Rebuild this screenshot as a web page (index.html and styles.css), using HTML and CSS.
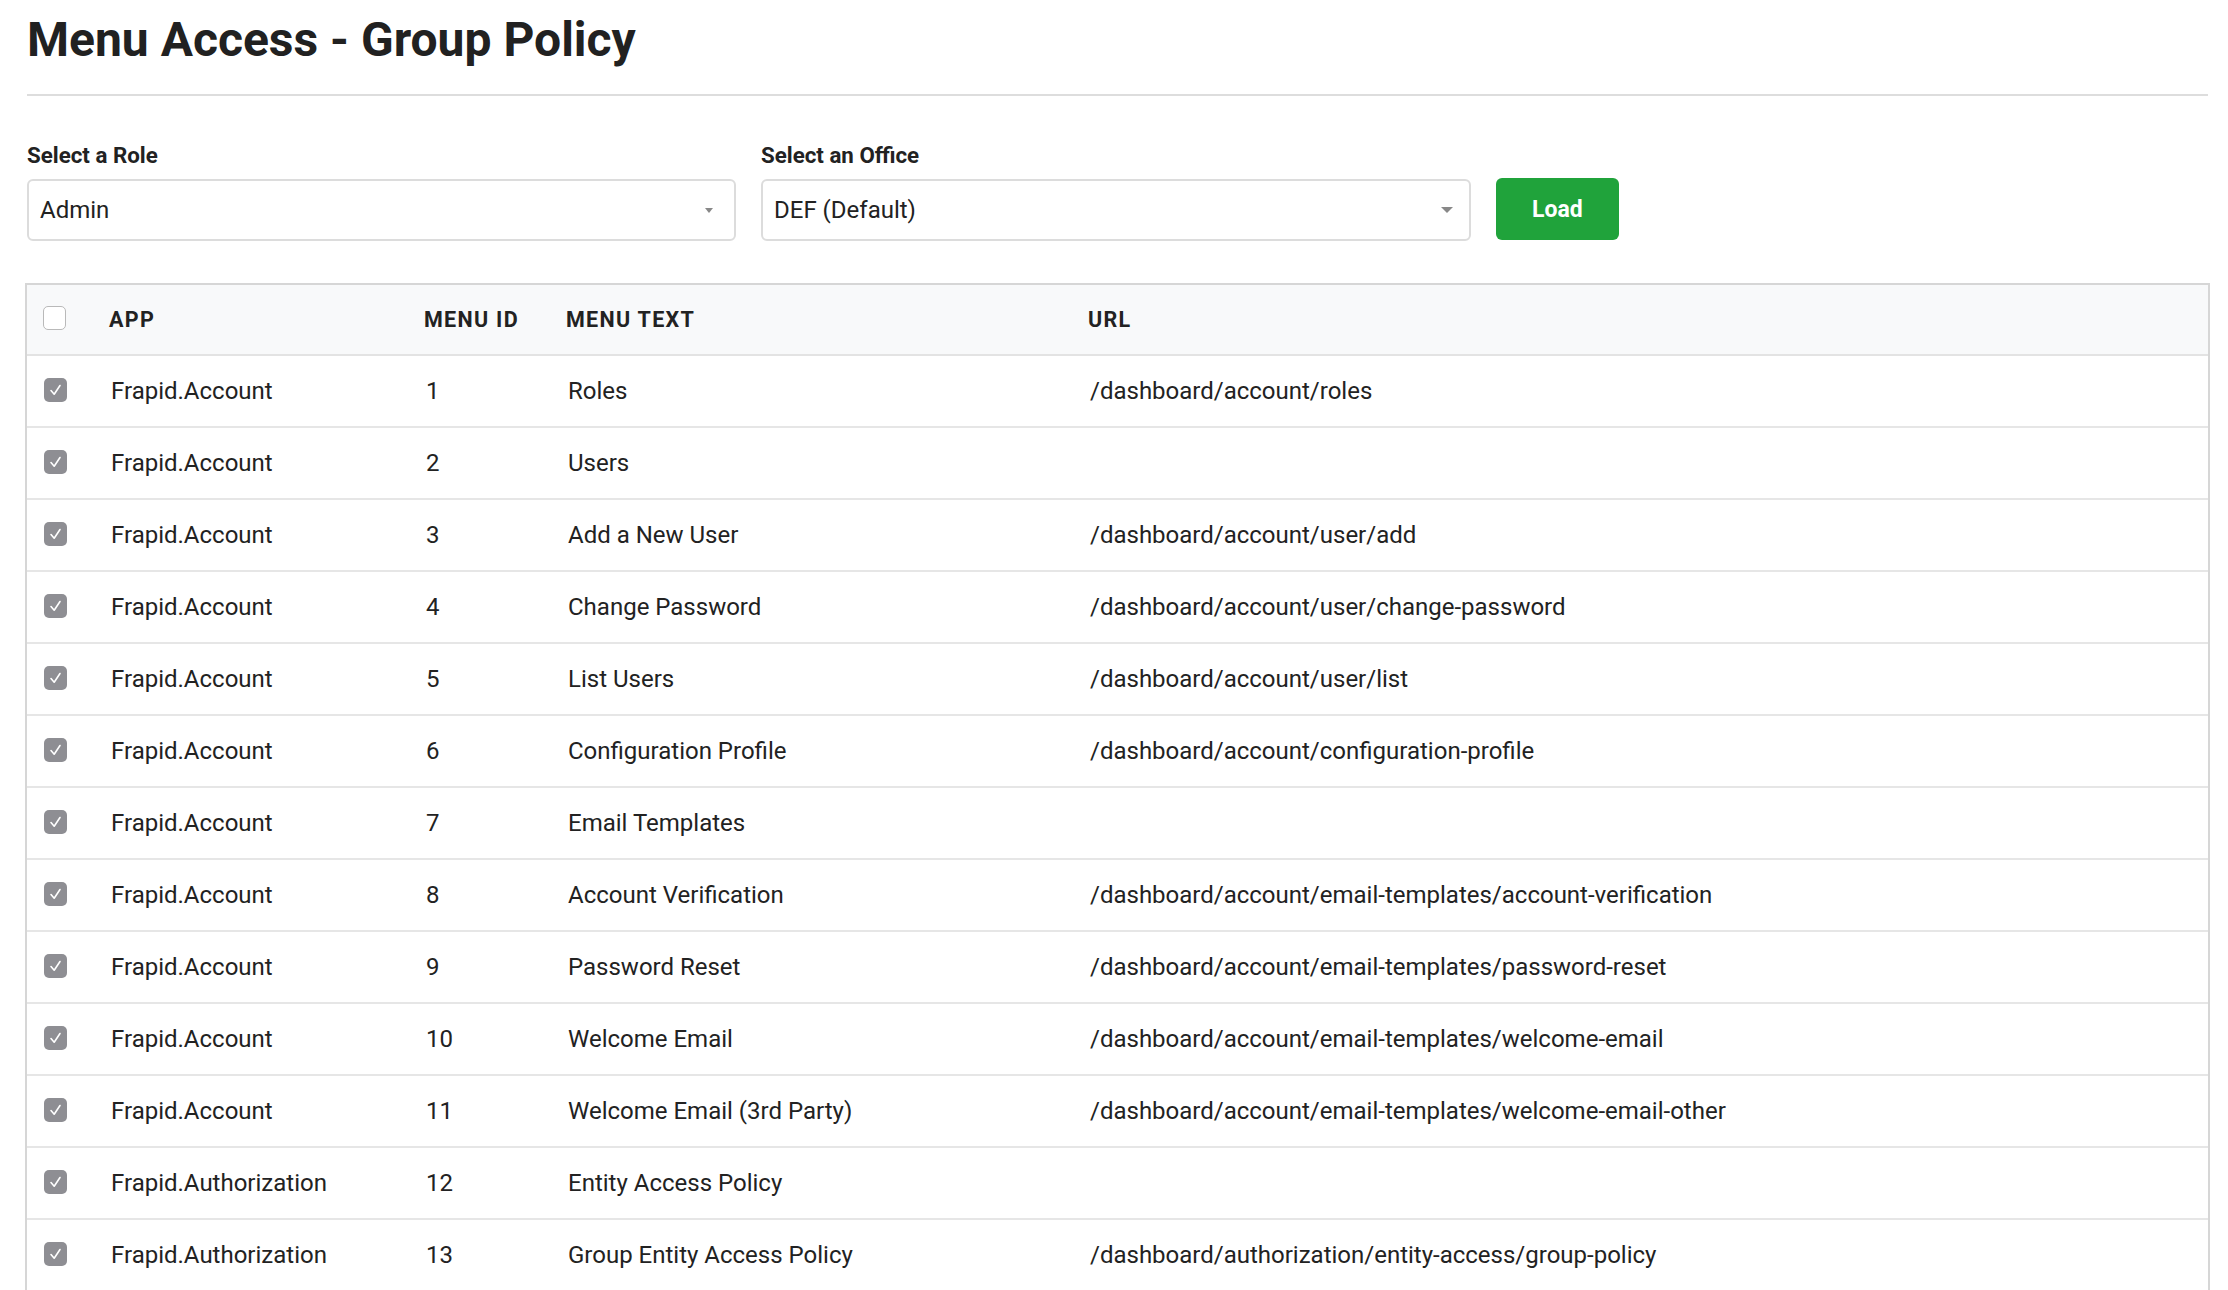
FILE: index.html
```html
<!DOCTYPE html>
<html lang="en">
<head>
<meta charset="utf-8">
<title>Menu Access - Group Policy</title>
<link rel="stylesheet" href="styles.css">
</head>
<body>
<div class="page">
  <div class="title-bar">
    <h1 class="title">Menu Access - Group Policy</h1>
  </div>

  <div class="filters">
    <div class="field">
      <div class="field-label">Select a Role</div>
      <div class="select">
        <span class="select-text">Admin</span>
        <span class="caret caret-small"></span>
      </div>
    </div>
    <div class="field">
      <div class="field-label">Select an Office</div>
      <div class="select">
        <span class="select-text">DEF (Default)</span>
        <span class="caret caret-large"></span>
      </div>
    </div>
    <button class="btn-load" type="button">Load</button>
  </div>

  <table class="grid">
    <colgroup>
      <col class="c-check">
      <col class="c-app">
      <col class="c-id">
      <col class="c-text">
      <col class="c-url">
    </colgroup>
    <thead>
      <tr>
        <th class="cell-check"><span class="box"></span></th>
        <th>APP</th>
        <th>MENU ID</th>
        <th>MENU TEXT</th>
        <th>URL</th>
      </tr>
    </thead>
    <tbody>
      <tr><td class="cell-check"><span class="box checked"><svg viewBox="0 0 23 24" width="23" height="24"><polyline points="7,12.5 10.2,16.2 16,7.5" fill="none" stroke="#fff" stroke-width="1.6" stroke-linecap="round" stroke-linejoin="round"/></svg></span></td><td>Frapid.Account</td><td>1</td><td>Roles</td><td>/dashboard/account/roles</td></tr>
      <tr><td class="cell-check"><span class="box checked"><svg viewBox="0 0 23 24" width="23" height="24"><polyline points="7,12.5 10.2,16.2 16,7.5" fill="none" stroke="#fff" stroke-width="1.6" stroke-linecap="round" stroke-linejoin="round"/></svg></span></td><td>Frapid.Account</td><td>2</td><td>Users</td><td></td></tr>
      <tr><td class="cell-check"><span class="box checked"><svg viewBox="0 0 23 24" width="23" height="24"><polyline points="7,12.5 10.2,16.2 16,7.5" fill="none" stroke="#fff" stroke-width="1.6" stroke-linecap="round" stroke-linejoin="round"/></svg></span></td><td>Frapid.Account</td><td>3</td><td>Add a New User</td><td>/dashboard/account/user/add</td></tr>
      <tr><td class="cell-check"><span class="box checked"><svg viewBox="0 0 23 24" width="23" height="24"><polyline points="7,12.5 10.2,16.2 16,7.5" fill="none" stroke="#fff" stroke-width="1.6" stroke-linecap="round" stroke-linejoin="round"/></svg></span></td><td>Frapid.Account</td><td>4</td><td>Change Password</td><td>/dashboard/account/user/change-password</td></tr>
      <tr><td class="cell-check"><span class="box checked"><svg viewBox="0 0 23 24" width="23" height="24"><polyline points="7,12.5 10.2,16.2 16,7.5" fill="none" stroke="#fff" stroke-width="1.6" stroke-linecap="round" stroke-linejoin="round"/></svg></span></td><td>Frapid.Account</td><td>5</td><td>List Users</td><td>/dashboard/account/user/list</td></tr>
      <tr><td class="cell-check"><span class="box checked"><svg viewBox="0 0 23 24" width="23" height="24"><polyline points="7,12.5 10.2,16.2 16,7.5" fill="none" stroke="#fff" stroke-width="1.6" stroke-linecap="round" stroke-linejoin="round"/></svg></span></td><td>Frapid.Account</td><td>6</td><td>Configuration Profile</td><td>/dashboard/account/configuration-profile</td></tr>
      <tr><td class="cell-check"><span class="box checked"><svg viewBox="0 0 23 24" width="23" height="24"><polyline points="7,12.5 10.2,16.2 16,7.5" fill="none" stroke="#fff" stroke-width="1.6" stroke-linecap="round" stroke-linejoin="round"/></svg></span></td><td>Frapid.Account</td><td>7</td><td>Email Templates</td><td></td></tr>
      <tr><td class="cell-check"><span class="box checked"><svg viewBox="0 0 23 24" width="23" height="24"><polyline points="7,12.5 10.2,16.2 16,7.5" fill="none" stroke="#fff" stroke-width="1.6" stroke-linecap="round" stroke-linejoin="round"/></svg></span></td><td>Frapid.Account</td><td>8</td><td>Account Verification</td><td>/dashboard/account/email-templates/account-verification</td></tr>
      <tr><td class="cell-check"><span class="box checked"><svg viewBox="0 0 23 24" width="23" height="24"><polyline points="7,12.5 10.2,16.2 16,7.5" fill="none" stroke="#fff" stroke-width="1.6" stroke-linecap="round" stroke-linejoin="round"/></svg></span></td><td>Frapid.Account</td><td>9</td><td>Password Reset</td><td>/dashboard/account/email-templates/password-reset</td></tr>
      <tr><td class="cell-check"><span class="box checked"><svg viewBox="0 0 23 24" width="23" height="24"><polyline points="7,12.5 10.2,16.2 16,7.5" fill="none" stroke="#fff" stroke-width="1.6" stroke-linecap="round" stroke-linejoin="round"/></svg></span></td><td>Frapid.Account</td><td>10</td><td>Welcome Email</td><td>/dashboard/account/email-templates/welcome-email</td></tr>
      <tr><td class="cell-check"><span class="box checked"><svg viewBox="0 0 23 24" width="23" height="24"><polyline points="7,12.5 10.2,16.2 16,7.5" fill="none" stroke="#fff" stroke-width="1.6" stroke-linecap="round" stroke-linejoin="round"/></svg></span></td><td>Frapid.Account</td><td>11</td><td>Welcome Email (3rd Party)</td><td>/dashboard/account/email-templates/welcome-email-other</td></tr>
      <tr><td class="cell-check"><span class="box checked"><svg viewBox="0 0 23 24" width="23" height="24"><polyline points="7,12.5 10.2,16.2 16,7.5" fill="none" stroke="#fff" stroke-width="1.6" stroke-linecap="round" stroke-linejoin="round"/></svg></span></td><td>Frapid.Authorization</td><td>12</td><td>Entity Access Policy</td><td></td></tr>
      <tr><td class="cell-check"><span class="box checked"><svg viewBox="0 0 23 24" width="23" height="24"><polyline points="7,12.5 10.2,16.2 16,7.5" fill="none" stroke="#fff" stroke-width="1.6" stroke-linecap="round" stroke-linejoin="round"/></svg></span></td><td>Frapid.Authorization</td><td>13</td><td>Group Entity Access Policy</td><td>/dashboard/authorization/entity-access/group-policy</td></tr>
    </tbody>
  </table>
</div>
</body>
</html>
```
FILE: styles.css
```css
html, body {
  margin: 0;
  padding: 0;
  background: #ffffff;
  overflow: hidden;
}

body {
  font-family: Roboto, "Liberation Sans", Arial, sans-serif;
  color: #222222;
}

.page {
  padding: 11px 20px 0 27px;
}

.title-bar {
  border-bottom: 2px solid #dddddd;
  padding-bottom: 25px;
}

.title {
  margin: 0;
  font-size: 48px;
  line-height: 58px;
  font-weight: 700;
  color: #212121;
}

.filters {
  display: grid;
  grid-template-columns: 709px 710px auto;
  column-gap: 25px;
  align-items: end;
  justify-items: start;
  margin-top: 46px;
}

.field {
  display: flex;
  flex-direction: column;
  width: 100%;
}

.field-label {
  font-size: 22.3px;
  line-height: 26px;
  font-weight: 700;
  color: #222222;
  margin-bottom: 11px;
}

.select {
  box-sizing: border-box;
  height: 62px;
  border: 2px solid #dcdcdc;
  border-radius: 6px;
  background: #ffffff;
  display: flex;
  align-items: center;
  padding-left: 11px;
}

.select-text {
  flex: 1;
  font-size: 24px;
  color: #222222;
}

.caret {
  width: 0;
  height: 0;
  border-style: solid;
  border-color: #888888 transparent transparent transparent;
}

.caret-small {
  border-width: 5px 4.5px 0 4.5px;
  margin-right: 21px;
}

.caret-large {
  border-width: 6px 6.5px 0 6.5px;
  margin-right: 16px;
}

.btn-load {
  box-sizing: border-box;
  height: 62px;
  margin-bottom: 1px;
  padding: 0 36px;
  border: 0;
  border-radius: 6px;
  background: #20a33b;
  color: #ffffff;
  font-family: Roboto, "Liberation Sans", Arial, sans-serif;
  font-size: 23px;
  font-weight: 700;
}

.grid {
  margin-top: 42px;
  margin-left: -2px;
  width: calc(100% + 4px);
  border: 2px solid #d6d6d6;
  border-bottom: 0;
  border-collapse: separate;
  border-spacing: 0;
  table-layout: fixed;
}

.c-check { width: 68px; }
.c-app { width: 315px; }
.c-id { width: 142px; }
.c-text { width: 522px; }

.grid th {
  background: #f8f9fa;
  text-align: left;
  font-size: 21.5px;
  line-height: 25px;
  font-weight: 700;
  letter-spacing: 1.3px;
  padding: 22px 16px 22px 14px;
  border-bottom: 2px solid #e3e3e3;
  color: #222222;
}

.grid td {
  font-size: 24px;
  line-height: 28px;
  padding: 21px 16px;
  border-bottom: 2px solid #e6e6e6;
  color: #222222;
  white-space: nowrap;
}

.grid th.cell-check {
  padding: 21px 0 24px 16px;
}

.grid td.cell-check {
  padding: 22px 0 24px 17px;
}

.box {
  display: block;
  box-sizing: border-box;
  width: 23px;
  height: 24px;
  border-radius: 5px;
  border: 1.5px solid #b9b9b9;
  background: #ffffff;
}

.box.checked {
  border: 0;
  background: #8e8e93;
}

.box svg {
  display: block;
}
```
